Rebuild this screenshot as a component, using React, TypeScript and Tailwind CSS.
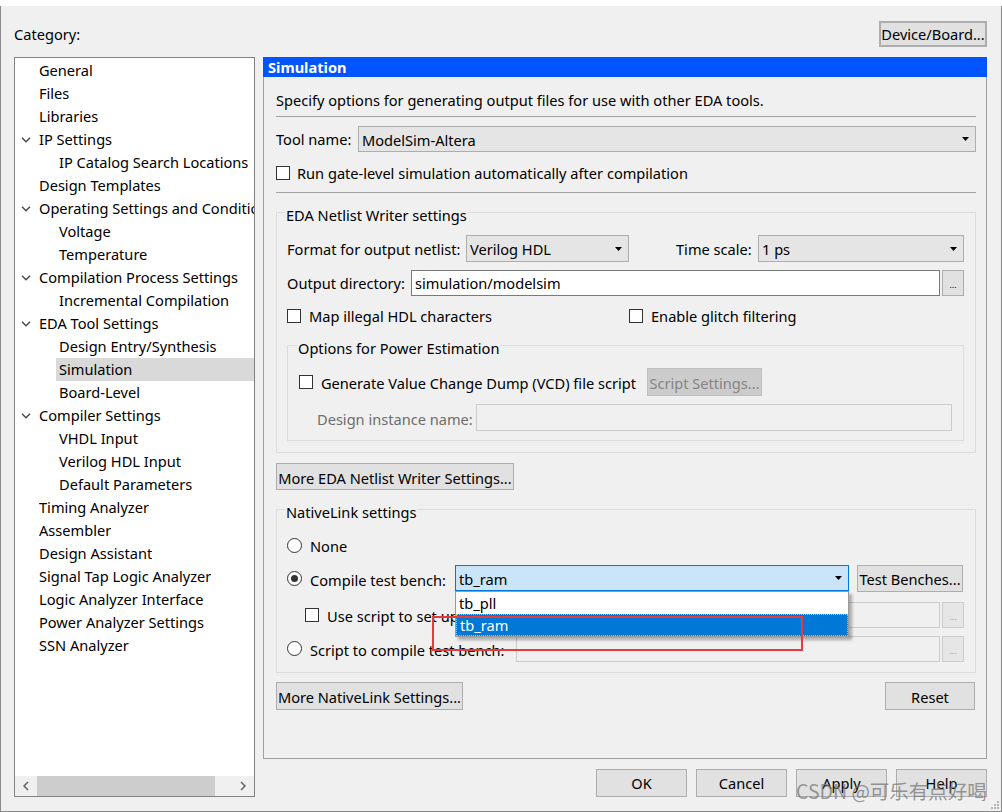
import React from "react";

const Caret = () => (
  <svg width="7" height="4" viewBox="0 0 7 4" className="shrink-0">
    <path d="M0 0H7L3.5 4Z" fill="#000" />
  </svg>
);

function Select({
  text,
  className = "",
  active = false,
  children,
}: {
  text: string;
  className?: string;
  active?: boolean;
  children?: React.ReactNode;
}) {
  return (
    <div
      className={`relative flex items-center justify-between border pl-[3px] pr-[6px] ${
        active ? "border-[#0078d7] bg-[#cce4f7]" : "border-[#adadad] bg-[#e5e5e5]"
      } ${className}`}
    >
      <span className="whitespace-nowrap pt-[3px]">{text}</span>
      <Caret />
      {children}
    </div>
  );
}

function Btn({
  children,
  className = "",
  disabled = false,
  tight = false,
}: {
  children: React.ReactNode;
  className?: string;
  disabled?: boolean;
  tight?: boolean;
}) {
  return (
    <div
      className={`flex items-center justify-center border whitespace-nowrap ${
        disabled ? "bg-[#cccccc] border-[#bfbfbf] text-[#858585]" : "bg-[#e1e1e1] border-[#adadad] text-black"
      } ${className}`}
    >
      <span className={tight ? "pt-[1px]" : "pt-[3px]"}>{children}</span>
    </div>
  );
}

const Check = () => <div className="w-[14px] h-[14px] border border-[#333333] bg-white shrink-0" />;

const Radio = ({ on = false }: { on?: boolean }) => (
  <div className="w-[15px] h-[15px] rounded-full border border-[#333333] bg-white shrink-0 flex items-center justify-center">
    {on && <div className="w-[7px] h-[7px] rounded-full bg-[#333333]" />}
  </div>
);

function Field({
  className = "",
  children,
  disabled = false,
}: {
  className?: string;
  children?: React.ReactNode;
  disabled?: boolean;
}) {
  return (
    <div
      className={`h-full border flex items-center pl-[3px] whitespace-nowrap ${
        disabled ? "bg-[#f0f0f0] border-[#cccccc]" : "bg-white border-[#7a7a7a]"
      } ${className}`}
    >
      {children && <span className="pt-[1px]">{children}</span>}
    </div>
  );
}

const Dots = ({ disabled = false }: { disabled?: boolean }) => (
  <div
    className={`w-[22px] h-full ml-[2px] border flex items-end justify-center pb-[6px] text-[9px] leading-none ${
      disabled ? "bg-[#e6e6e6] border-[#cccccc] text-[#a0a0a0]" : "bg-[#e1e1e1] border-[#adadad] text-black"
    }`}
  >
    ...
  </div>
);

function Group({
  title,
  className = "",
  children,
}: {
  title: string;
  className?: string;
  children: React.ReactNode;
}) {
  return (
    <div className={`border border-[#dcdcdc] ${className}`}>
      <div className="-mt-[9px] -ml-[2px] w-fit px-[1px] pt-[1px] bg-[#f0f0f0] h-[20px] leading-[20px] whitespace-nowrap">
        {title}
      </div>
      {children}
    </div>
  );
}

const Chevron = () => (
  <svg width="10" height="6" viewBox="0 0 10 6" className="ml-[6px]">
    <polyline points="1,0.8 5,4.8 9,0.8" fill="none" stroke="#4a4a4a" strokeWidth="1.5" />
  </svg>
);

type Item = { t: string; l: 1 | 2; c?: boolean; s?: boolean };
const items: Item[] = [
  { t: "General", l: 1 },
  { t: "Files", l: 1 },
  { t: "Libraries", l: 1 },
  { t: "IP Settings", l: 1, c: true },
  { t: "IP Catalog Search Locations", l: 2 },
  { t: "Design Templates", l: 1 },
  { t: "Operating Settings and Conditions", l: 1, c: true },
  { t: "Voltage", l: 2 },
  { t: "Temperature", l: 2 },
  { t: "Compilation Process Settings", l: 1, c: true },
  { t: "Incremental Compilation", l: 2 },
  { t: "EDA Tool Settings", l: 1, c: true },
  { t: "Design Entry/Synthesis", l: 2 },
  { t: "Simulation", l: 2, s: true },
  { t: "Board-Level", l: 2 },
  { t: "Compiler Settings", l: 1, c: true },
  { t: "VHDL Input", l: 2 },
  { t: "Verilog HDL Input", l: 2 },
  { t: "Default Parameters", l: 2 },
  { t: "Timing Analyzer", l: 1 },
  { t: "Assembler", l: 1 },
  { t: "Design Assistant", l: 1 },
  { t: "Signal Tap Logic Analyzer", l: 1 },
  { t: "Logic Analyzer Interface", l: 1 },
  { t: "Power Analyzer Settings", l: 1 },
  { t: "SSN Analyzer", l: 1 },
];

function Tree() {
  return (
    <div className="w-[241px] h-[740px] border border-[#828282] bg-white flex flex-col shrink-0">
      <div className="flex-1 pt-[1px] overflow-hidden">
        {items.map((it) => (
          <div key={it.t} className="h-[23px] flex items-center">
            {it.l === 1 ? (
              <>
                <div className="w-[24px] shrink-0 flex items-center">{it.c && <Chevron />}</div>
                <span className="whitespace-nowrap overflow-hidden pt-[1px]">{it.t}</span>
              </>
            ) : (
              <div
                className={`ml-[41px] flex-1 h-full flex items-center pl-[3px] pt-[1px] whitespace-nowrap overflow-hidden ${
                  it.s ? "bg-[#d9d9d9]" : ""
                }`}
              >
                {it.t}
              </div>
            )}
          </div>
        ))}
      </div>
      <div className="h-[20px] flex bg-[#f0f0f0] shrink-0">
        <div className="w-[22px] flex items-center justify-center">
          <svg width="6" height="10" viewBox="0 0 6 10">
            <polyline points="5,1 1,5 5,9" fill="none" stroke="#606060" strokeWidth="1.5" />
          </svg>
        </div>
        <div className="w-[178px] bg-[#cdcdcd]" />
        <div className="flex-1" />
        <div className="w-[22px] flex items-center justify-center">
          <svg width="6" height="10" viewBox="0 0 6 10">
            <polyline points="1,1 5,5 1,9" fill="none" stroke="#606060" strokeWidth="1.5" />
          </svg>
        </div>
      </div>
    </div>
  );
}

function Panel() {
  return (
    <div className="h-[702px] border-l border-r border-b border-[#a0a0a0] flex flex-col">
      <div className="h-[20px] bg-[#0055ff] text-white font-bold pl-[5px] pt-[1px] flex items-center shrink-0 -mx-[1px]">
        Simulation
      </div>
      <div className="pl-[12px] pr-[10px] flex flex-col">
        <div className="mt-[13px] h-[20px] leading-[20px]">
          Specify options for generating output files for use with other EDA tools.
        </div>
        <div className="mt-[6px] h-[1px] bg-[#a0a0a0]" />
        <div className="mt-[9px] h-[26px] flex items-center">
          <div className="w-[82px] shrink-0 pt-[2px]">Tool name:</div>
          <Select text="ModelSim-Altera" className="flex-1 h-full" />
        </div>
        <div className="mt-[11px] h-[20px] flex items-center">
          <Check />
          <span className="ml-[7px] pt-[1px]">Run gate-level simulation automatically after compilation</span>
        </div>
        <div className="mt-[9px] h-[1px] bg-[#a0a0a0]" />

        <Group title="EDA Netlist Writer settings" className="mt-[19px] pl-[10px] pr-[11px] pb-[11px]">
          <div className="mt-[11px] h-[27px] flex items-center">
            <div className="w-[179px] shrink-0 whitespace-nowrap pt-[3px]">Format for output netlist:</div>
            <Select text="Verilog HDL" className="w-[163px] h-full" />
            <div className="ml-[47px] w-[82px] shrink-0 whitespace-nowrap pt-[3px]">Time scale:</div>
            <Select text="1 ps" className="w-[206px] h-full" />
          </div>
          <div className="mt-[8px] h-[26px] flex items-center">
            <div className="w-[124px] shrink-0 whitespace-nowrap pt-[1px]">Output directory:</div>
            <Field className="w-[529px]">simulation/modelsim</Field>
            <Dots />
          </div>
          <div className="mt-[10px] h-[20px] flex items-center">
            <div className="w-[342px] flex items-center shrink-0">
              <Check />
              <span className="ml-[8px] whitespace-nowrap pt-[1px]">Map illegal HDL characters</span>
            </div>
            <Check />
            <span className="ml-[8px] whitespace-nowrap pt-[1px]">Enable glitch filtering</span>
          </div>

          <Group title="Options for Power Estimation" className="mt-[19px] pl-[11px] pr-[11px] pb-[9px]">
            <div className="mt-[11px] h-[28px] flex items-center">
              <div className="w-[348px] flex items-center shrink-0">
                <Check />
                <span className="ml-[8px] whitespace-nowrap pt-[3px]">Generate Value Change Dump (VCD) file script</span>
              </div>
              <Btn disabled className="w-[115px] h-full">
                Script Settings...
              </Btn>
            </div>
            <div className="mt-[8px] h-[27px] flex items-center">
              <div className="ml-[18px] w-[159px] shrink-0 text-[#6d6d6d] whitespace-nowrap pt-[4px]">
                Design instance name:
              </div>
              <Field disabled className="w-[476px]" />
            </div>
          </Group>
        </Group>

        <Btn className="mt-[10px] h-[27px] w-[238px]">
          <span className="block pt-[1px]">More EDA Netlist Writer Settings...</span>
        </Btn>

        <Group title="NativeLink settings" className="mt-[19px] pl-[10px] pr-[11px] pb-[10px]">
          <div className="mt-[14px] h-[21px] flex items-center">
            <Radio />
            <span className="ml-[8px] pt-[3px]">None</span>
          </div>
          <div className="mt-[9px] h-[27px] flex items-start">
            <div className="w-[168px] h-[27px] flex items-center shrink-0">
              <Radio on />
              <span className="ml-[8px] whitespace-nowrap pt-[4px]">Compile test bench:</span>
            </div>
            <Select active text="tb_ram" className="w-[394px] h-[26px] z-10">
              <div className="absolute left-[-1px] top-[25px] w-[394px] bg-white border border-[#9a9a9a] shadow-[3px_3px_3px_rgba(0,0,0,0.3)]">
                <div className="h-[22px] flex items-center pl-[3px] pt-[2px]">tb_pll</div>
                <div className="h-[22px] flex items-center pl-[3px] pt-[2px] bg-[#0078d7] text-white border border-dotted border-[#e9b77a]">
                  tb_ram
                </div>
              </div>
            </Select>
            <Btn className="ml-[8px] w-[106px] h-[27px]">Test Benches...</Btn>
          </div>
          <div className="mt-[10px] h-[26px] flex items-center">
            <div className="ml-[18px] w-[235px] flex items-center shrink-0">
              <Check />
              <span className="ml-[8px] whitespace-nowrap pt-[3px]">Use script to set up simulation:</span>
            </div>
            <Field disabled className="w-[400px]" />
            <Dots disabled />
          </div>
          <div className="mt-[8px] h-[26px] flex items-center">
            <div className="w-[229px] flex items-center shrink-0">
              <Radio />
              <span className="ml-[8px] whitespace-nowrap pt-[3px]">Script to compile test bench:</span>
            </div>
            <Field disabled className="w-[424px]" />
            <Dots disabled />
          </div>
        </Group>

        <div className="mt-[9px] h-[28px] flex justify-between pr-[1px]">
          <Btn className="w-[187px] h-full">More NativeLink Settings...</Btn>
          <Btn className="w-[90px] h-full">Reset</Btn>
        </div>
      </div>
    </div>
  );
}

export default function App() {
  return (
    <div className="w-[1002px] h-[812px] bg-[#f0f0f0] text-black text-[14.6px] leading-normal font-['Noto_Sans',sans-serif] relative overflow-hidden flex flex-col">
      <div className="h-[6px] bg-white shrink-0" />
      <div className="flex-1 flex flex-col border-l border-r border-b border-[#8a8a8a]">
        <div className="h-[51px] flex items-start justify-between pl-[13px] pr-[14px] pt-[15px] shrink-0">
          <div className="h-[28px] flex items-center">Category:</div>
          <Btn tight className="w-[108px] h-[26px] border-2 border-[#0078d7]">
            Device/Board...
          </Btn>
        </div>
        <div className="flex pl-[13px] pr-[14px] gap-[8px]">
          <Tree />
          <div className="w-[724px] flex flex-col">
            <Panel />
            <div className="mt-[10px] h-[28px] flex justify-end gap-[9px]">
              <Btn tight className="w-[91px] h-full">OK</Btn>
              <Btn tight className="w-[91px] h-full">Cancel</Btn>
              <Btn tight className="w-[91px] h-full">Apply</Btn>
              <Btn tight className="w-[91px] h-full">Help</Btn>
            </div>
          </div>
        </div>
      </div>

      <div className="absolute left-[432px] top-[616px] w-[371px] h-[35px] border-2 border-[#e83a3a] z-20" />

      <div className="absolute left-[796px] top-[778px] text-[19.5px] leading-[26px] text-[rgba(125,125,125,0.8)] font-['Noto_Sans_CJK_SC',sans-serif] whitespace-nowrap z-30">
        CSDN @可乐有点好喝
      </div>

      <svg className="absolute right-[2px] bottom-[2px]" width="10" height="10" viewBox="0 0 10 10">
        <rect x="7" y="1" width="2" height="2" fill="#b5b5b5" />
        <rect x="4" y="4" width="2" height="2" fill="#b5b5b5" />
        <rect x="7" y="4" width="2" height="2" fill="#b5b5b5" />
        <rect x="1" y="7" width="2" height="2" fill="#b5b5b5" />
        <rect x="4" y="7" width="2" height="2" fill="#b5b5b5" />
        <rect x="7" y="7" width="2" height="2" fill="#b5b5b5" />
      </svg>
    </div>
  );
}
